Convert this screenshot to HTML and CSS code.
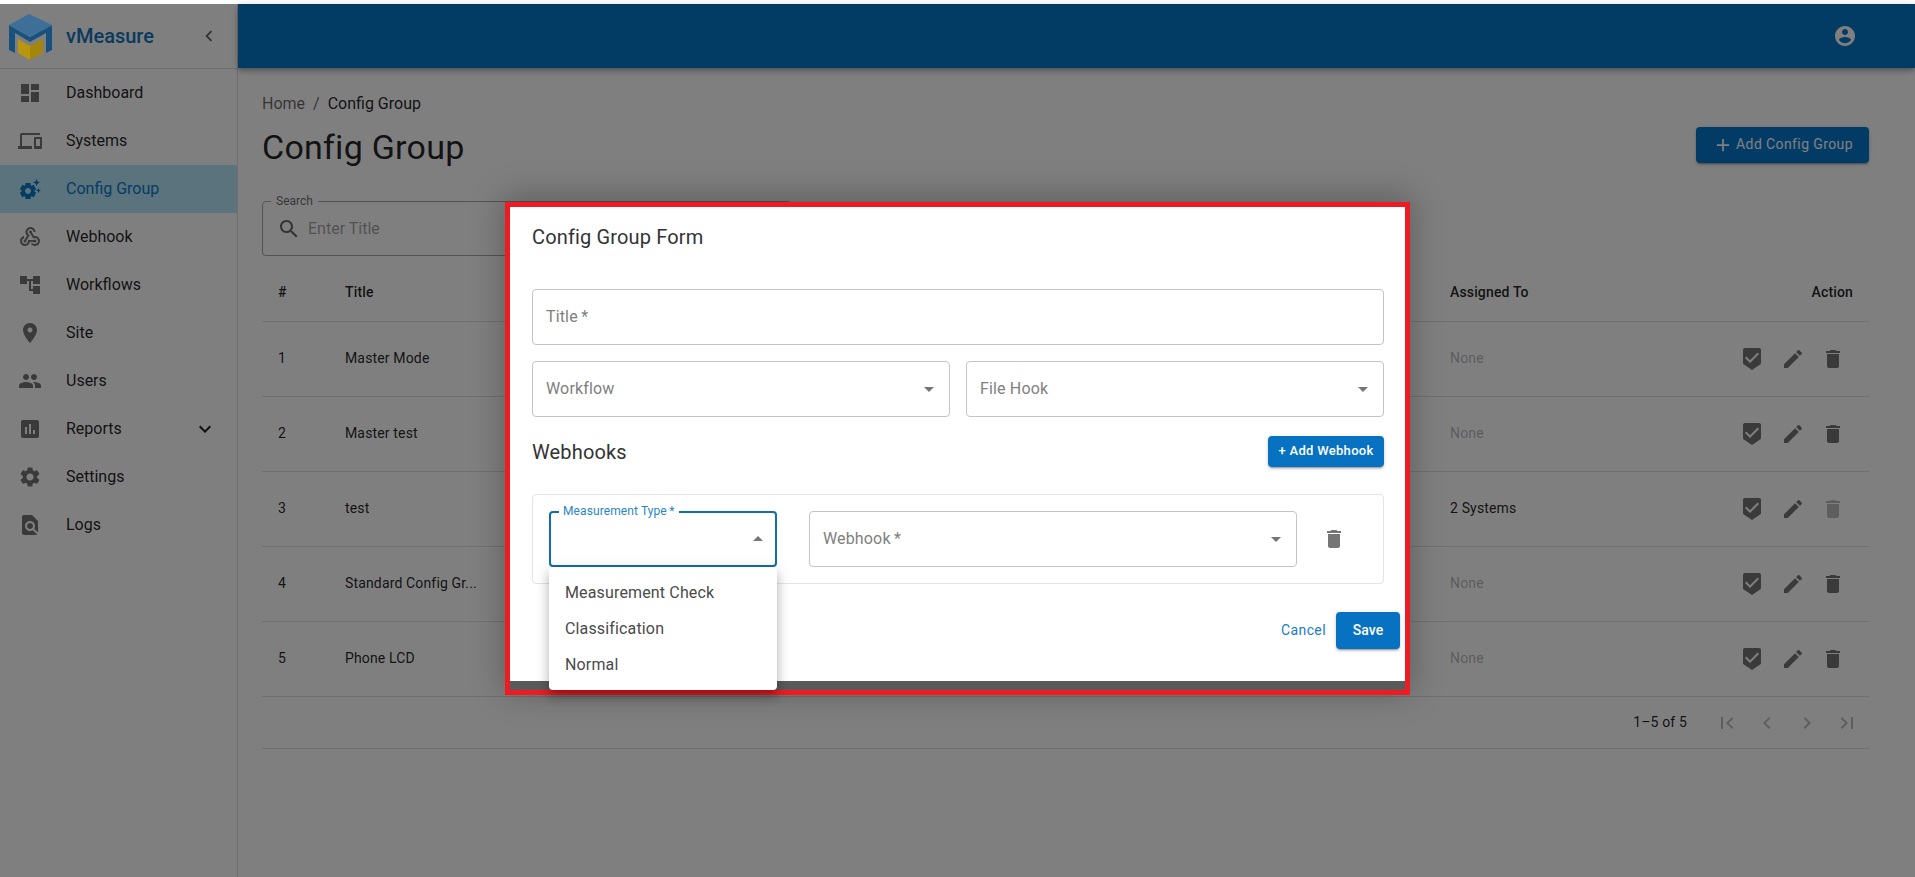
FILE: index.html
```html
<!DOCTYPE html>
<html lang="en">
<head>
<meta charset="utf-8">
<title>vMeasure - Config Group</title>
<link rel="stylesheet" href="styles.css">
</head>
<body>
<svg class="sprite" xmlns="http://www.w3.org/2000/svg">
  <symbol id="i-dashboard" viewBox="0 0 24 24"><path d="M3 13h8V3H3v10zm0 8h8v-6H3v6zm10 0h8V11h-8v10zm0-18v6h8V3h-8z"/></symbol>
  <symbol id="i-devices" viewBox="0 0 24 24"><path d="M4 6h18V4H4c-1.1 0-2 .9-2 2v11H0v3h14v-3H4V6zm19 2h-6c-.55 0-1 .45-1 1v10c0 .55.45 1 1 1h6c.55 0 1-.45 1-1V9c0-.55-.45-1-1-1zm-1 9h-4v-7h4v7z"/></symbol>
  <symbol id="i-suggest" viewBox="0 0 24 24"><path d="M17.41 6.59 15 5.5l2.41-1.09L18.5 2l1.09 2.41L22 5.5l-2.41 1.09L18.5 9l-1.09-2.41zm3.87 6.13L20.5 11l-.78 1.72-1.72.78 1.72.78.78 1.72.78-1.72L23 13.5l-1.72-.78zm-5.04 1.65 1.94 1.47-2.5 4.33-2.24-.94c-.2.13-.42.26-.64.37l-.3 2.4h-5l-.3-2.41c-.22-.11-.43-.23-.64-.37l-2.24.94-2.5-4.33 1.94-1.47c-.01-.11-.01-.24-.01-.37s0-.26.01-.37l-1.94-1.47 2.5-4.33 2.24.94c.2-.13.42-.26.64-.37L7.5 6h5l.3 2.41c.22.11.43.23.64.37l2.24-.94 2.5 4.33-1.94 1.47c.01.12.01.24.01.37s0 .25-.01.36zM13 14c0-1.66-1.34-3-3-3s-3 1.34-3 3 1.34 3 3 3 3-1.34 3-3z"/></symbol>
  <symbol id="i-webhook" viewBox="0 0 24 24"><path d="M10 15h5.88c.27-.31.67-.5 1.12-.5.83 0 1.5.67 1.5 1.5s-.67 1.5-1.5 1.5c-.44 0-.84-.19-1.12-.5H11.9c-.46 2.28-2.48 4-4.9 4-2.76 0-5-2.24-5-5 0-2.42 1.72-4.44 4-4.9v2.07c-1.16.41-2 1.53-2 2.83 0 1.65 1.35 3 3 3s3-1.35 3-3v-2zm2.5-11c1.65 0 3 1.35 3 3h2c0-2.76-2.24-5-5-5s-5 2.24-5 5c0 1.43.6 2.71 1.55 3.62l-2.35 3.9c-.68.14-1.2.75-1.2 1.48 0 .83.67 1.5 1.5 1.5s1.5-.67 1.5-1.5c0-.16-.02-.31-.07-.45l3.38-5.63C10.49 9.61 9.5 8.42 9.5 7c0-1.65 1.35-3 3-3zm4.5 9c-.64 0-1.23.2-1.72.54l-3.05-5.07C11.53 8.35 11 7.74 11 7c0-.83.67-1.5 1.5-1.5S14 6.17 14 7c0 .15-.02.29-.06.43l2.19 3.65c.28-.05.57-.08.87-.08 2.76 0 5 2.24 5 5s-2.24 5-5 5c-1.85 0-3.47-1.01-4.33-2.5h2.67c.48.32 1.05.5 1.66.5 1.65 0 3-1.35 3-3s-1.35-3-3-3z"/></symbol>
  <symbol id="i-tree" viewBox="0 0 24 24"><path d="M22 11V3h-7v3H9V3H2v8h7V8h2v10h4v3h7v-8h-7v3h-2V8h2v3z"/></symbol>
  <symbol id="i-place" viewBox="0 0 24 24"><path d="M12 2C8.13 2 5 5.13 5 9c0 5.25 7 13 7 13s7-7.75 7-13c0-3.87-3.13-7-7-7zm0 9.5c-1.38 0-2.5-1.12-2.5-2.5s1.12-2.5 2.5-2.5 2.5 1.12 2.5 2.5-1.12 2.5-2.5 2.5z"/></symbol>
  <symbol id="i-people" viewBox="0 0 24 24"><path d="M16 11c1.66 0 2.99-1.34 2.99-3S17.66 5 16 5c-1.66 0-3 1.34-3 3s1.34 3 3 3zm-8 0c1.66 0 2.99-1.34 2.99-3S9.66 5 8 5C6.34 5 5 6.34 5 8s1.34 3 3 3zm0 2c-2.33 0-7 1.17-7 3.5V19h14v-2.5c0-2.33-4.67-3.5-7-3.5zm8 0c-.29 0-.62.02-.97.05 1.16.84 1.97 1.97 1.97 3.45V19h6v-2.5c0-2.33-4.67-3.5-7-3.5z"/></symbol>
  <symbol id="i-assess" viewBox="0 0 24 24"><path d="M19 3H5c-1.1 0-2 .9-2 2v14c0 1.1.9 2 2 2h14c1.1 0 2-.9 2-2V5c0-1.1-.9-2-2-2zM9 17H7v-7h2v7zm4 0h-2V7h2v10zm4 0h-2v-4h2v4z"/></symbol>
  <symbol id="i-settings" viewBox="0 0 24 24"><path d="M19.14 12.94c.04-.3.06-.61.06-.94 0-.32-.02-.64-.07-.94l2.03-1.58c.18-.14.23-.41.12-.61l-1.92-3.32c-.12-.22-.37-.29-.59-.22l-2.39.96c-.5-.38-1.03-.7-1.62-.94l-.36-2.54c-.04-.24-.24-.41-.48-.41h-3.84c-.24 0-.43.17-.47.41l-.36 2.54c-.59.24-1.13.57-1.62.94l-2.39-.96c-.22-.08-.47 0-.59.22L2.74 8.87c-.12.21-.08.47.12.61l2.03 1.58c-.05.3-.09.63-.09.94s.02.64.07.94l-2.03 1.58c-.18.14-.23.41-.12.61l1.92 3.32c.12.22.37.29.59.22l2.39-.96c.5.38 1.03.7 1.62.94l.36 2.54c.05.24.24.41.48.41h3.84c.24 0 .44-.17.47-.41l.36-2.54c.59-.24 1.13-.56 1.62-.94l2.39.96c.22.08.47 0 .59-.22l1.92-3.32c.12-.22.07-.47-.12-.61l-2.01-1.58zM12 15.6c-1.98 0-3.6-1.62-3.6-3.6s1.62-3.6 3.6-3.6 3.6 1.62 3.6 3.6-1.62 3.6-3.6 3.6z"/></symbol>
  <symbol id="i-find" viewBox="0 0 24 24"><path d="M20 19.59V8l-6-6H6c-1.1 0-1.99.9-1.99 2L4 20c0 1.1.89 2 1.99 2H18c.45 0 .85-.15 1.19-.4l-4.43-4.43c-.8.52-1.74.83-2.76.83-2.76 0-5-2.24-5-5s2.24-5 5-5 5 2.24 5 5c0 1.02-.31 1.96-.83 2.75L20 19.59zM9 13c0 1.66 1.34 3 3 3s3-1.34 3-3-1.34-3-3-3-3 1.34-3 3z"/></symbol>
  <symbol id="i-beenhere" viewBox="0 0 24 24"><path d="M19 1H5c-1.1 0-1.99.9-1.99 2L3 15.93c0 .69.35 1.3.88 1.66L12 23l8.11-5.41c.53-.36.88-.97.88-1.66L21 3c0-1.1-.9-2-2-2zm-9 15l-5-5 1.41-1.41L10 13.17l7.59-7.59L19 7l-9 9z"/></symbol>
  <symbol id="i-edit" viewBox="0 0 24 24"><path d="M3 17.25V21h3.75L17.81 9.94l-3.75-3.75L3 17.25zM20.71 7.04c.39-.39.39-1.02 0-1.41l-2.34-2.34c-.39-.39-1.02-.39-1.41 0l-1.83 1.83 3.75 3.75 1.83-1.83z"/></symbol>
  <symbol id="i-delete" viewBox="0 0 24 24"><path d="M6 19c0 1.1.9 2 2 2h8c1.1 0 2-.9 2-2V7H6v12zM19 4h-3.5l-1-1h-5l-1 1H5v2h14V4z"/></symbol>
  <symbol id="i-account" viewBox="0 0 24 24"><path d="M12 2C6.48 2 2 6.48 2 12s4.48 10 10 10 10-4.48 10-10S17.52 2 12 2zm0 3c1.66 0 3 1.34 3 3s-1.34 3-3 3-3-1.34-3-3 1.34-3 3-3zm0 14.2c-2.5 0-4.71-1.28-6-3.22.03-1.99 4-3.08 6-3.08 1.99 0 5.97 1.09 6 3.08-1.29 1.94-3.5 3.22-6 3.22z"/></symbol>
  <symbol id="i-search" viewBox="0 0 24 24"><path d="M15.5 14h-.79l-.28-.27C15.41 12.59 16 11.11 16 9.5 16 5.91 13.09 3 9.5 3S3 5.91 3 9.5 5.91 16 9.5 16c1.61 0 3.09-.59 4.23-1.57l.27.28v.79l5 4.99L20.49 19l-4.99-5zm-6 0C7.01 14 5 11.99 5 9.5S7.01 5 9.5 5 14 7.01 14 9.5 11.99 14 9.5 14z"/></symbol>
  <symbol id="i-first" viewBox="0 0 24 24"><path d="M18.41 16.59L13.82 12l4.59-4.59L17 6l-6 6 6 6zM6 6h2v12H6z"/></symbol>
  <symbol id="i-last" viewBox="0 0 24 24"><path d="M5.59 7.41L10.18 12l-4.59 4.59L7 18l6-6-6-6zM16 6h2v12h-2z"/></symbol>
  <symbol id="i-prev" viewBox="0 0 24 24"><path d="M15.41 7.41L14 6l-6 6 6 6 1.41-1.41L10.83 12z"/></symbol>
  <symbol id="i-next" viewBox="0 0 24 24"><path d="M10 6L8.59 7.41 13.17 12l-4.58 4.59L10 18l6-6z"/></symbol>
  <symbol id="i-more" viewBox="0 0 24 24"><path d="M16.59 8.59L12 13.17 7.41 8.59 6 10l6 6 6-6z"/></symbol>
  <symbol id="i-add" viewBox="0 0 24 24"><path d="M19 13h-6v6h-2v-6H5v-2h6V5h2v6h6v2z"/></symbol>
  <symbol id="i-down" viewBox="0 0 24 24"><path d="M7 10l5 5 5-5z"/></symbol>
  <symbol id="i-up" viewBox="0 0 24 24"><path d="M7 14l5-5 5 5z"/></symbol>
</svg>

<div class="app">
  <aside class="sidebar">
    <div class="brand">
      <svg class="logo" viewBox="0 0 44 47" aria-hidden="true">
        <path class="logo-band" d="M0 11L21 23L43 11V36L37 39V19L21 28L6 19V39L0 36Z"/>
        <path class="logo-top" d="M20 0L43 11L21 23L0 11Z"/>
        <path class="logo-box" d="M9 25L21 32V46L9 39Z"/>
        <path class="logo-box-dark" d="M21 32L34 25V39L21 46Z"/>
      </svg>
      <span class="brand-name">vMeasure</span>
      <svg class="icon brand-toggle"><use href="#i-prev"/></svg>
    </div>
    <nav class="nav">
      <a class="nav-item"><svg class="icon"><use href="#i-dashboard"/></svg><span>Dashboard</span></a>
      <a class="nav-item"><svg class="icon"><use href="#i-devices"/></svg><span>Systems</span></a>
      <a class="nav-item is-active"><svg class="icon"><use href="#i-suggest"/></svg><span>Config Group</span></a>
      <a class="nav-item"><svg class="icon"><use href="#i-webhook"/></svg><span>Webhook</span></a>
      <a class="nav-item"><svg class="icon"><use href="#i-tree"/></svg><span>Workflows</span></a>
      <a class="nav-item"><svg class="icon"><use href="#i-place"/></svg><span>Site</span></a>
      <a class="nav-item"><svg class="icon"><use href="#i-people"/></svg><span>Users</span></a>
      <a class="nav-item"><svg class="icon"><use href="#i-assess"/></svg><span>Reports</span><svg class="icon nav-caret"><use href="#i-more"/></svg></a>
      <a class="nav-item"><svg class="icon"><use href="#i-settings"/></svg><span>Settings</span></a>
      <a class="nav-item"><svg class="icon"><use href="#i-find"/></svg><span>Logs</span></a>
    </nav>
  </aside>

  <div class="workspace">
    <header class="appbar"><svg class="icon appbar-user"><use href="#i-account"/></svg></header>
    <main class="content">
      <div class="breadcrumb"><span class="crumb-link">Home</span><span class="crumb-sep">/</span><span>Config Group</span></div>
      <div class="page-head">
        <h1 class="page-title">Config Group</h1>
        <button class="btn-add"><svg class="icon"><use href="#i-add"/></svg><span class="btn-add-label">Add Config Group</span></button>
      </div>
      <div class="search">
        <span class="search-label">Search</span>
        <svg class="icon"><use href="#i-search"/></svg>
        <span class="search-placeholder">Enter Title</span>
      </div>
      <div class="table">
        <div class="row row-head"><span>#</span><span>Title</span><span>Assigned To</span><span class="cell-end">Action</span></div>
        <div class="row"><span>1</span><span>Master Mode</span><span class="muted">None</span><span class="actions"><svg class="icon"><use href="#i-beenhere"/></svg><svg class="icon"><use href="#i-edit"/></svg><svg class="icon"><use href="#i-delete"/></svg></span></div>
        <div class="row"><span>2</span><span>Master test</span><span class="muted">None</span><span class="actions"><svg class="icon"><use href="#i-beenhere"/></svg><svg class="icon"><use href="#i-edit"/></svg><svg class="icon"><use href="#i-delete"/></svg></span></div>
        <div class="row"><span>3</span><span>test</span><span>2 Systems</span><span class="actions"><svg class="icon"><use href="#i-beenhere"/></svg><svg class="icon"><use href="#i-edit"/></svg><svg class="icon is-disabled"><use href="#i-delete"/></svg></span></div>
        <div class="row"><span>4</span><span>Standard Config Gr...</span><span class="muted">None</span><span class="actions"><svg class="icon"><use href="#i-beenhere"/></svg><svg class="icon"><use href="#i-edit"/></svg><svg class="icon"><use href="#i-delete"/></svg></span></div>
        <div class="row"><span>5</span><span>Phone LCD</span><span class="muted">None</span><span class="actions"><svg class="icon"><use href="#i-beenhere"/></svg><svg class="icon"><use href="#i-edit"/></svg><svg class="icon"><use href="#i-delete"/></svg></span></div>
      </div>
      <div class="pager">
        <span class="pager-count">1–5 of 5</span>
        <svg class="icon"><use href="#i-first"/></svg>
        <svg class="icon"><use href="#i-prev"/></svg>
        <svg class="icon"><use href="#i-next"/></svg>
        <svg class="icon"><use href="#i-last"/></svg>
      </div>
    </main>
  </div>

  <div class="backdrop">
    <section class="modal">
      <div class="dialog">
        <h2 class="dialog-title">Config Group Form</h2>
        <div class="field field-full"><span class="field-text">Title&thinsp;*</span></div>
        <div class="field-row">
          <div class="field"><span class="field-text">Workflow</span><svg class="icon field-arrow"><use href="#i-down"/></svg></div>
          <div class="field"><span class="field-text">File Hook</span><svg class="icon field-arrow"><use href="#i-down"/></svg></div>
        </div>
        <div class="section-head">
          <h3 class="section-title">Webhooks</h3>
          <button class="btn-small">+ Add Webhook</button>
        </div>
        <div class="webhook-card">
          <div class="field field-focus">
            <span class="field-legend">Measurement Type&thinsp;*</span>
            <svg class="icon field-arrow"><use href="#i-up"/></svg>
            <ul class="menu">
              <li>Measurement Check</li>
              <li>Classification</li>
              <li>Normal</li>
            </ul>
          </div>
          <div class="field field-webhook"><span class="field-text">Webhook&thinsp;*</span><svg class="icon field-arrow"><use href="#i-down"/></svg></div>
          <svg class="icon card-delete"><use href="#i-delete"/></svg>
        </div>
        <div class="dialog-actions">
          <button class="btn-text">Cancel</button>
          <button class="btn-save">Save</button>
        </div>
      </div>
    </section>
  </div>
</div>
</body>
</html>
```

FILE: styles.css
```css
* { box-sizing: border-box; }
html, body { margin: 0; height: 100%; }
body {
  background: #fff;
  padding-top: 4px;
  overflow: hidden;
  font-family: Roboto, "Liberation Sans", sans-serif;
  color: rgba(0, 0, 0, .87);
}
.sprite { display: none; }
.icon { width: 24px; height: 24px; fill: currentColor; flex: none; display: block; }

.app { position: relative; display: flex; height: 873px; }

/* sidebar */
.sidebar { width: 238px; flex: none; border-right: 1px solid #e0e0e0; background: #fff; }
.brand { height: 65px; display: flex; align-items: center; padding-left: 9px; border-bottom: 1px solid #e0e0e0; }
.logo { position: relative; z-index: 1; width: 44px; height: 47px; flex: none; margin-top: 2px; }
.logo-top { fill: #3d6f99; }
.logo-band { fill: #17527f; }
.logo-box { fill: #b8960f; }
.logo-box-dark { fill: #a5860c; }
.brand-name { margin-left: 13px; font-size: 20px; font-weight: 500; color: #1574bc; flex: 1; padding-bottom: 1px; }
.brand-toggle { width: 22px; height: 22px; color: rgba(0, 0, 0, .6); margin-right: 17px; }
.nav-item { height: 48px; display: flex; align-items: center; padding-left: 18px; font-size: 16px; color: rgba(0, 0, 0, .87); }
.nav-item > span { padding-bottom: 2px; }
.nav-item > .icon:first-child { color: rgba(0, 0, 0, .54); margin-right: 24px; }
.nav-item.is-active { background: #b4e6f8; color: #0a78c8; }
.nav-item.is-active > .icon:first-child { color: #0a78c8; }
.nav-caret { margin-left: auto; margin-right: 20px; color: rgba(0, 0, 0, .87); }

/* workspace */
.workspace { flex: 1; min-width: 0; display: flex; flex-direction: column; }
.appbar {
  height: 64px; flex: none; background: #0476c8; display: flex; align-items: center; justify-content: flex-end;
  padding-right: 58px; color: #fff;
  box-shadow: 0 2px 4px -1px rgba(0,0,0,.2), 0 4px 5px rgba(0,0,0,.14), 0 1px 10px rgba(0,0,0,.12);
}
.content { padding: 24px 46px 0 24px; }
.breadcrumb { display: flex; font-size: 16px; line-height: 24px; height: 24px; color: rgba(0, 0, 0, .87); }
.crumb-link, .crumb-sep { color: rgba(0, 0, 0, .6); }
.crumb-sep { margin: 0 8px; }
.page-head { display: flex; align-items: flex-start; justify-content: space-between; height: 52px; margin-top: 5px; }
.page-title { margin: 0; font-size: 34px; font-weight: 400; line-height: 52px; letter-spacing: .25px; }
.btn-add {
  width: 173px; height: 36px; margin-top: 6px; border: 0; border-radius: 4px; background: #0478cc; color: #fff;
  display: flex; align-items: center; justify-content: flex-end; padding: 0 16px; font: 400 14px Roboto, sans-serif; letter-spacing: .4px;
  box-shadow: 0 3px 1px -2px rgba(0,0,0,.2), 0 2px 2px rgba(0,0,0,.14), 0 1px 5px rgba(0,0,0,.12);
}
.btn-add .icon { width: 20px; height: 20px; margin-right: 3px; transform: scale(1.05); }
.btn-add-label { padding-bottom: 2px; }
.search {
  position: relative; width: 530px; height: 55px; margin-top: 28px; border: 1px solid rgba(0, 0, 0, .35); border-radius: 4px;
  display: flex; align-items: center; padding-left: 14px; color: rgba(0, 0, 0, .6);
}
.search-label { position: absolute; left: 8px; top: -8px; padding: 0 5px; font-size: 12px; line-height: 14px; background: #fff; }
.search-placeholder { margin-left: 7px; font-size: 16px; color: rgba(0, 0, 0, .38); }

.row {
  display: grid; grid-template-columns: 67px 1105px 1fr auto; align-items: center; height: 75px; padding-left: 16px;
  border-bottom: 1px solid #e0e0e0; font-size: 14px; letter-spacing: .15px;
}
.row > span:not(.actions) { padding-bottom: 2px; }
.row-head { height: 66px; padding-top: 8px; font-weight: 500; }
.cell-end { padding-right: 16px; text-align: right; }
.muted { color: rgba(0, 0, 0, .3); }
.actions { display: flex; gap: 16.5px; padding-right: 24px; color: rgba(0, 0, 0, .54); }
.is-disabled { color: rgba(0, 0, 0, .26); }
.pager {
  display: flex; align-items: center; height: 52px; border-bottom: 1px solid #e0e0e0; justify-content: flex-end;
  gap: 16px; padding-right: 10px; color: rgba(0, 0, 0, .26);
}
.pager-count { font-size: 14px; letter-spacing: .15px; color: rgba(0, 0, 0, .87); margin-right: 12px; padding-bottom: 2px; }

/* overlay */
.backdrop {
  position: absolute; inset: 0; background: rgba(0, 0, 0, .5);
  display: flex; justify-content: center; align-items: flex-start; padding-top: 198px;
}
.modal { width: 905px; height: 493px; border: 5px solid #ed1c24; background: #5a5a5a; box-shadow: 0 -4px 30px 2px rgba(0,0,0,.25); }
.dialog { height: 474px; background: #fff; padding: 14px 21px 0 22px; color: rgba(0, 0, 0, .87); }
.dialog-title { margin: 0 0 36px; font-size: 20px; font-weight: 400; line-height: 32px; letter-spacing: .15px; color: #333; }
.field {
  position: relative; height: 56px; border: 1px solid #c4c4c4; border-radius: 4px; display: flex; align-items: center;
  padding: 0 13px; font-size: 16px; color: #808080; flex: 1; min-width: 0;
}
.field-text { letter-spacing: .15px; position: relative; top: -1px; }
.field-arrow { position: absolute; right: 8px; top: 50%; margin-top: -12px; color: #757575; }
.field-row { display: flex; gap: 16px; margin-top: 16px; }
.section-head { display: flex; align-items: center; justify-content: space-between; margin-top: 19px; height: 31px; }
.section-title { margin: 0; font-size: 20px; font-weight: 400; letter-spacing: .15px; color: #333; }
.btn-small {
  height: 31px; width: 116px; border: 0; border-radius: 4px; background: #0872c2; color: #fff; font: 500 13px Roboto, sans-serif; letter-spacing: .3px; padding: 0 0 2px;
  box-shadow: 0 3px 1px -2px rgba(0,0,0,.2), 0 2px 2px rgba(0,0,0,.14), 0 1px 5px rgba(0,0,0,.12);
}
.webhook-card { display: flex; align-items: center; margin-top: 27px; height: 90px; border: 1px solid #e4e4e4; border-radius: 4px; padding: 0 16px; }
.field-focus { flex: none; width: 228px; border: 2px solid #106ea8; }
.field-focus .field-arrow { right: 5px; }
.field-legend { position: absolute; left: 8px; top: -9px; padding: 0 4px; background: #fff; font-size: 12px; line-height: 14px; color: #2a85c8; white-space: nowrap; letter-spacing: .1px; }
.field-webhook { flex: none; width: 488px; margin-left: 32px; }
.card-delete { margin-left: 25px; color: #757575; }
.menu {
  position: absolute; z-index: 2; left: -2px; right: -2px; top: 54px; margin: 0; padding: 8px 0 7px; list-style: none; background: #fff; border-radius: 4px;
  box-shadow: 0 5px 5px -3px rgba(0,0,0,.2), 0 8px 10px 1px rgba(0,0,0,.14), 0 3px 14px 2px rgba(0,0,0,.12);
}
.menu li { height: 36px; line-height: 36px; padding-left: 16px; font-size: 16px; color: #4a4a4a; letter-spacing: .15px; white-space: nowrap; }
.dialog-actions { display: flex; align-items: center; justify-content: flex-end; gap: 10px; margin: 28px -16px 0 0; }
.btn-text { border: 0; background: none; padding: 0 0 2px; font: 400 14px Roboto, sans-serif; letter-spacing: .4px; color: #1a7cc4; }
.btn-save {
  width: 64px; height: 37px; border: 0; border-radius: 4px; background: #0872c2; color: #fff; font: 500 14px Roboto, sans-serif; padding: 0 0 2px;
  box-shadow: 0 3px 1px -2px rgba(0,0,0,.2), 0 2px 2px rgba(0,0,0,.14), 0 1px 5px rgba(0,0,0,.12);
}
```
